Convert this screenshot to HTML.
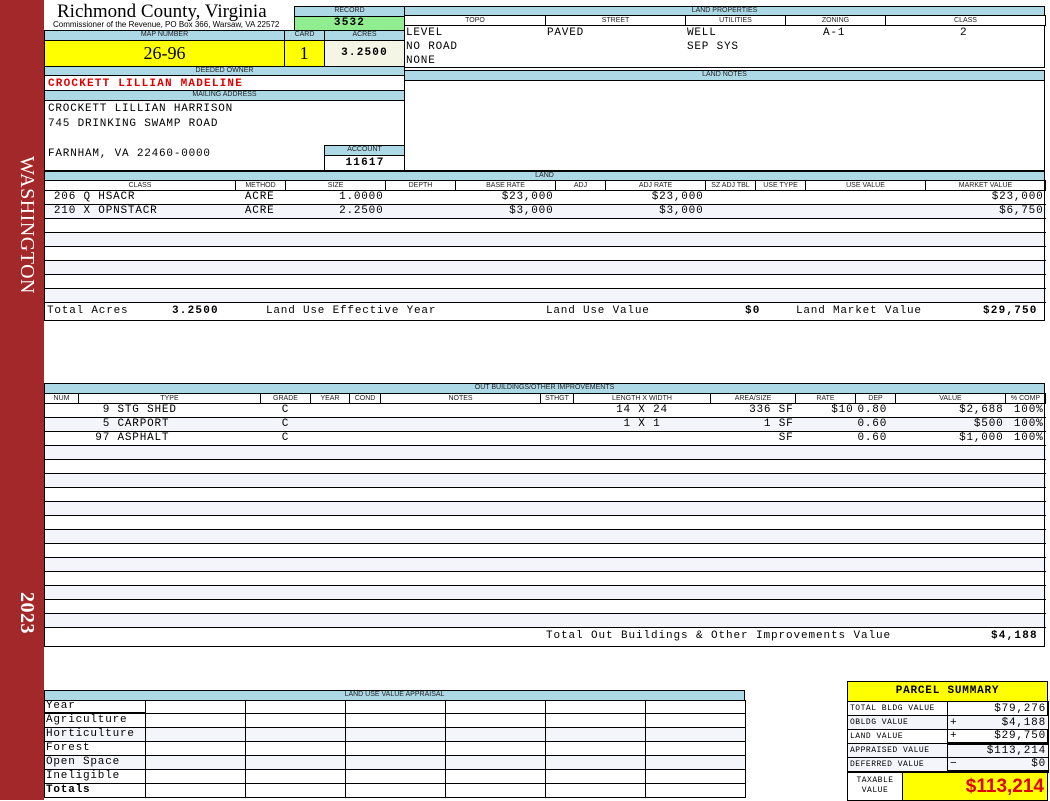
<!DOCTYPE html>
<html><head><meta charset="utf-8"><style>
*{margin:0;padding:0;box-sizing:border-box}
body{width:1050px;height:800px;background:#fff;position:relative;overflow:hidden;font-family:"Liberation Mono",monospace;font-size:11px;color:#000;letter-spacing:0.8px}
.a{position:absolute}
.side{left:0;top:0;width:44px;height:800px;background:#a3282a}
.vt{position:absolute;color:#fff;font-family:"Liberation Serif",serif;font-size:20px;transform:rotate(90deg);transform-origin:left top;white-space:nowrap;letter-spacing:0.5px}
.hd{background:#add8e6;border:1px solid #000;font-family:"Liberation Sans",sans-serif;font-size:7px;text-align:center;line-height:8px;color:#222;letter-spacing:0}
table{border-collapse:collapse;table-layout:fixed;position:absolute}
td{border:1px solid #000;padding:0 2px;white-space:nowrap;overflow:hidden}
.ch td{font-family:"Liberation Sans",sans-serif;font-size:7px;text-align:center;height:10px;line-height:8px;color:#222;letter-spacing:0}
.dr td{height:14px;line-height:13px;border-left:none;border-right:none;font-size:11px}
.r{text-align:right}
.c{text-align:center}
.alt td{background:#f4f4fb}
.box{border:1px solid #000}
.b{font-weight:bold;letter-spacing:1.2px}
</style></head><body>
<div class="a side"></div>
<div class="vt" style="left:38px;top:156px">WASHINGTON</div>
<div class="vt" style="left:38px;top:592px;font-weight:bold">2023</div>

<div class="a" style="left:57px;top:1px;font-family:'Liberation Serif',serif;font-size:19px;line-height:21px;letter-spacing:0">Richmond County, Virginia</div>
<div class="a" style="left:53px;top:20px;font-family:'Liberation Sans',sans-serif;font-size:8px;letter-spacing:0">Commissioner of the Revenue, PO Box 366, Warsaw, VA 22572</div>

<div class="a hd" style="left:294px;top:6px;width:111px;height:11px">RECORD</div>
<div class="a box b" style="left:294px;top:16px;width:111px;height:15px;background:#90ee90;text-align:center;font-size:11px;line-height:13px">3532</div>

<div class="a hd" style="left:44px;top:30px;width:241px;height:11px">MAP NUMBER</div>
<div class="a hd" style="left:284px;top:30px;width:41px;height:11px">CARD</div>
<div class="a hd" style="left:324px;top:30px;width:81px;height:11px">ACRES</div>
<div class="a box" style="left:44px;top:40px;width:241px;height:27px;background:#ffff00;text-align:center;font-family:'Liberation Serif',serif;font-size:18px;line-height:25px;letter-spacing:0">26-96</div>
<div class="a box" style="left:284px;top:40px;width:41px;height:27px;background:#ffff00;text-align:center;font-family:'Liberation Serif',serif;font-size:18px;line-height:25px">1</div>
<div class="a box b" style="left:324px;top:40px;width:81px;height:27px;background:#f5f5e6;text-align:center;font-size:11px;line-height:25px">3.2500</div>

<div class="a hd" style="left:44px;top:66px;width:361px;height:10px">DEEDED OWNER</div>
<div class="a box b" style="left:44px;top:75px;width:361px;height:16px;color:#e00000;padding-left:3px;line-height:16px">CROCKETT LILLIAN MADELINE</div>
<div class="a hd" style="left:44px;top:90px;width:361px;height:11px">MAILING ADDRESS</div>
<div class="a box" style="left:44px;top:100px;width:361px;height:71px"></div>
<div class="a" style="left:48px;top:102px;line-height:15px">CROCKETT LILLIAN HARRISON<br>745 DRINKING SWAMP ROAD<br><br>FARNHAM, VA 22460-0000</div>
<div class="a hd" style="left:324px;top:145px;width:81px;height:11px">ACCOUNT</div>
<div class="a b" style="left:324px;top:155px;width:81px;height:16px;border-left:1px solid #000;text-align:center;line-height:16px">11617</div>

<div class="a hd" style="left:404px;top:6px;width:641px;height:10px">LAND PROPERTIES</div>
<table style="left:404px;top:15px;width:641px">
<colgroup><col style="width:141px"><col style="width:140px"><col style="width:100px"><col style="width:100px"><col style="width:160px"></colgroup>
<tr class="ch"><td>TOPO</td><td>STREET</td><td>UTILITIES</td><td>ZONING</td><td>CLASS</td></tr>
</table>
<div class="a box" style="left:404px;top:25px;width:641px;height:43px"></div>
<div class="a" style="left:406px;top:26px;line-height:14px">LEVEL<br>NO ROAD<br>NONE</div>
<div class="a" style="left:547px;top:26px;line-height:14px">PAVED</div>
<div class="a" style="left:687px;top:26px;line-height:14px">WELL<br>SEP SYS</div>
<div class="a" style="left:823px;top:26px;line-height:14px">A-1</div>
<div class="a" style="left:960px;top:26px;line-height:14px">2</div>
<div class="a hd" style="left:404px;top:70px;width:641px;height:11px">LAND NOTES</div>
<div class="a box" style="left:404px;top:80px;width:641px;height:91px"></div>

<div class="a hd" style="left:44px;top:171px;width:1001px;height:10px">LAND</div>
<table style="left:44px;top:180px;width:1001px">
<colgroup><col style="width:191px"><col style="width:50px"><col style="width:100px"><col style="width:70px"><col style="width:100px"><col style="width:50px"><col style="width:100px"><col style="width:50px"><col style="width:50px"><col style="width:120px"><col style="width:120px"></colgroup>
<tr class="ch"><td>CLASS</td><td>METHOD</td><td>SIZE</td><td>DEPTH</td><td>BASE RATE</td><td>ADJ</td><td>ADJ RATE</td><td>SZ ADJ TBL</td><td>USE TYPE</td><td>USE VALUE</td><td>MARKET VALUE</td></tr>
<tr class="dr"><td>&nbsp;206 Q HSACR</td><td>&nbsp;ACRE</td><td class="r">1.0000</td><td></td><td class="r">$23,000</td><td></td><td class="r">$23,000</td><td></td><td></td><td></td><td class="r">$23,000</td></tr>
<tr class="dr alt"><td>&nbsp;210 X OPNSTACR</td><td>&nbsp;ACRE</td><td class="r">2.2500</td><td></td><td class="r">$3,000</td><td></td><td class="r">$3,000</td><td></td><td></td><td></td><td class="r">$6,750</td></tr>
<tr class="dr"><td colspan="11"></td></tr>
<tr class="dr alt"><td colspan="11"></td></tr>
<tr class="dr"><td colspan="11"></td></tr>
<tr class="dr alt"><td colspan="11"></td></tr>
<tr class="dr"><td colspan="11"></td></tr>
<tr class="dr alt"><td colspan="11"></td></tr>
</table>
<div class="a box" style="left:44px;top:180px;width:1001px;height:141px"></div>
<div class="a" style="left:44px;top:302px;width:1001px;border-top:1px solid #000"></div>
<div class="a" style="left:47px;top:304px;line-height:15px">Total Acres</div>
<div class="a b" style="left:172px;top:304px;line-height:15px">3.2500</div>
<div class="a" style="left:266px;top:304px;line-height:15px">Land Use Effective Year</div>
<div class="a" style="left:546px;top:304px;line-height:15px">Land Use Value</div>
<div class="a b" style="left:745px;top:304px;line-height:15px">$0</div>
<div class="a" style="left:796px;top:304px;line-height:15px">Land Market Value</div>
<div class="a b" style="left:983px;top:304px;line-height:15px">$29,750</div>

<div class="a hd" style="left:44px;top:383px;width:1001px;height:11px">OUT BUILDINGS/OTHER IMPROVEMENTS</div>
<table style="left:44px;top:393px;width:1001px">
<colgroup><col style="width:34px"><col style="width:182px"><col style="width:50px"><col style="width:39px"><col style="width:31px"><col style="width:160px"><col style="width:33px"><col style="width:137px"><col style="width:85px"><col style="width:60px"><col style="width:40px"><col style="width:110px"><col style="width:40px"></colgroup>
<tr class="ch"><td>NUM</td><td>TYPE</td><td>GRADE</td><td>YEAR</td><td>COND</td><td>NOTES</td><td>STHGT</td><td>LENGTH X WIDTH</td><td>AREA/SIZE</td><td>RATE</td><td>DEP</td><td>VALUE</td><td>% COMP</td></tr>
<tr class="dr"><td class="r">&nbsp;</td><td>&nbsp;&nbsp;&nbsp;9 STG SHED</td><td class="c">C</td><td></td><td></td><td></td><td></td><td class="c">14 X 24</td><td class="r">336 SF</td><td class="r">$10</td><td>0.80</td><td class="r">$2,688</td><td class="r">100%</td></tr>
<tr class="dr alt"><td class="r"></td><td>&nbsp;&nbsp;&nbsp;5 CARPORT</td><td class="c">C</td><td></td><td></td><td></td><td></td><td class="c">1 X 1</td><td class="r">1 SF</td><td class="r"></td><td>0.60</td><td class="r">$500</td><td class="r">100%</td></tr>
<tr class="dr"><td class="r"></td><td>&nbsp;&nbsp;97 ASPHALT</td><td class="c">C</td><td></td><td></td><td></td><td></td><td></td><td class="r">SF</td><td></td><td>0.60</td><td class="r">$1,000</td><td class="r">100%</td></tr>
<tr class="dr alt"><td colspan="13"></td></tr><tr class="dr"><td colspan="13"></td></tr>
<tr class="dr alt"><td colspan="13"></td></tr><tr class="dr"><td colspan="13"></td></tr>
<tr class="dr alt"><td colspan="13"></td></tr><tr class="dr"><td colspan="13"></td></tr>
<tr class="dr alt"><td colspan="13"></td></tr><tr class="dr"><td colspan="13"></td></tr>
<tr class="dr alt"><td colspan="13"></td></tr><tr class="dr"><td colspan="13"></td></tr>
<tr class="dr alt"><td colspan="13"></td></tr><tr class="dr"><td colspan="13"></td></tr>
<tr class="dr alt"><td colspan="13"></td></tr>
</table>
<div class="a box" style="left:44px;top:393px;width:1001px;height:254px"></div>
<div class="a" style="left:44px;top:627px;width:1001px;border-top:1px solid #000"></div>
<div class="a" style="left:546px;top:629px;line-height:15px;letter-spacing:0.9px">Total Out Buildings &amp; Other Improvements Value</div>
<div class="a b" style="left:991px;top:629px;line-height:15px">$4,188</div>

<div class="a hd" style="left:44px;top:690px;width:701px;height:11px">LAND USE VALUE APPRAISAL</div>
<table style="left:44px;top:700px;width:701px">
<colgroup><col style="width:101px"><col style="width:100px"><col style="width:100px"><col style="width:100px"><col style="width:100px"><col style="width:100px"><col style="width:100px"></colgroup>
<tr><td style="height:12px;line-height:11px;border-bottom:2px solid #000;padding:0 1px">Year</td><td></td><td></td><td></td><td></td><td></td><td></td></tr>
<tr><td style="height:14px;line-height:13px;padding:0 1px">Agriculture</td><td></td><td></td><td></td><td></td><td></td><td></td></tr>
<tr class="alt"><td style="height:14px;line-height:13px;padding:0 1px">Horticulture</td><td></td><td></td><td></td><td></td><td></td><td></td></tr>
<tr><td style="height:14px;line-height:13px;padding:0 1px">Forest</td><td></td><td></td><td></td><td></td><td></td><td></td></tr>
<tr class="alt"><td style="height:14px;line-height:13px;padding:0 1px">Open Space</td><td></td><td></td><td></td><td></td><td></td><td></td></tr>
<tr><td style="height:14px;line-height:13px;padding:0 1px">Ineligible</td><td></td><td></td><td></td><td></td><td></td><td></td></tr>
<tr><td style="height:14px;line-height:13px;font-weight:bold;padding:0 1px">Totals</td><td></td><td></td><td></td><td></td><td></td><td></td></tr>
</table>

<div class="a box" style="left:847px;top:681px;width:201px;height:120px;background:#fff"></div>
<div class="a box" style="left:847px;top:681px;width:201px;height:21px;background:#ffff00;text-align:center;font-weight:bold;font-size:11px;line-height:19px">PARCEL SUMMARY</div>
<table style="left:847px;top:701px;width:201px;font-size:8px">
<colgroup><col style="width:100px"><col style="width:101px"></colgroup>
<tr><td style="height:14px;font-size:8px;letter-spacing:0.5px">TOTAL BLDG VALUE</td><td class="r" style="font-size:11px">$79,276</td></tr>
<tr class="alt"><td style="height:14px;font-size:8px;letter-spacing:0.5px">OBLDG VALUE</td><td class="r" style="font-size:11px"><span style="float:left">+</span>$4,188</td></tr>
<tr><td style="height:14px;font-size:8px;letter-spacing:0.5px">LAND VALUE</td><td class="r" style="font-size:11px;border-bottom:3px solid #000"><span style="float:left">+</span>$29,750</td></tr>
<tr class="alt"><td style="height:14px;font-size:8px;letter-spacing:0.5px">APPRAISED VALUE</td><td class="r" style="font-size:11px">$113,214</td></tr>
<tr class="alt"><td style="height:14px;font-size:8px;letter-spacing:0.5px">DEFERRED VALUE</td><td class="r" style="font-size:11px;border-bottom:3px solid #000"><span style="float:left">&minus;</span>$0</td></tr>
</table>
<div class="a" style="left:847px;top:772px;width:56px;height:29px;border:1px solid #000;font-size:8px;text-align:center;line-height:10px;padding-top:3px;letter-spacing:0.5px">TAXABLE<br>VALUE</div>
<div class="a" style="left:902px;top:772px;width:146px;height:29px;border:1px solid #000;background:#ffff00;text-align:right;padding-right:3px;color:#e00000;font-family:'Liberation Sans',sans-serif;font-weight:bold;font-size:19px;line-height:27px;letter-spacing:0">$113,214</div>
</body></html>
